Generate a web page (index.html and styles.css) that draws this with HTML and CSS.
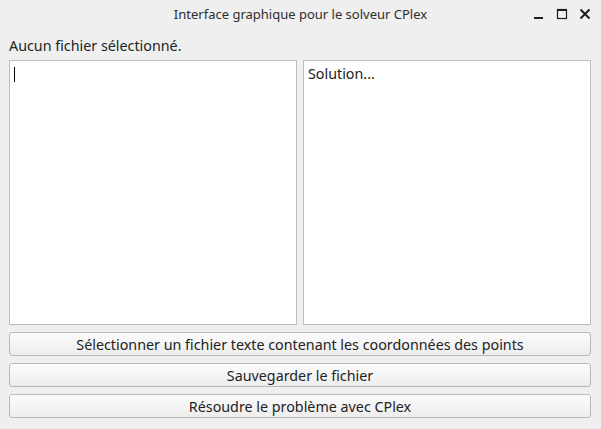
FILE: index.html
```html
<!DOCTYPE html>
<html lang="fr">
<head>
<meta charset="utf-8">
<title>Interface graphique pour le solveur CPlex</title>
<link rel="stylesheet" href="styles.css">
</head>
<body>
<div class="window">
  <header class="titlebar">
    <span class="title">Interface graphique pour le solveur CPlex</span>
    <div class="controls">
      <svg class="ctl" width="12" height="12" viewBox="0 0 12 12"><rect x="1" y="9" width="9" height="2" fill="#1e1e1e"/></svg>
      <svg class="ctl" width="12" height="12" viewBox="0 0 12 12"><rect x="1.5" y="1.5" width="9" height="9" fill="none" stroke="#1e1e1e" stroke-width="1.2"/><rect x="1" y="1" width="10" height="2" fill="#1e1e1e"/></svg>
      <svg class="ctl" width="12" height="12" viewBox="0 0 12 12"><path d="M1.5 1.5 L10.5 10.5 M10.5 1.5 L1.5 10.5" stroke="#1e1e1e" stroke-width="2"/></svg>
    </div>
  </header>
  <main class="content">
    <div class="label">Aucun fichier sélectionné.</div>
    <div class="panes">
      <div class="pane"><span class="caret"></span></div>
      <div class="pane">Solution...</div>
    </div>
    <div class="buttons">
      <button class="btn">Sélectionner un fichier texte contenant les coordonnées des points</button>
      <button class="btn">Sauvegarder le fichier</button>
      <button class="btn">Résoudre le problème avec CPlex</button>
    </div>
  </main>
</div>
</body>
</html>
```

FILE: styles.css
```css
html, body {
  margin: 0;
  padding: 0;
  background: #efefef;
}
.window {
  width: 601px;
  height: 429px;
  background: #efefef;
  font-family: "Noto Sans", "DejaVu Sans", sans-serif;
  color: #222;
  display: flex;
  flex-direction: column;
}
.titlebar {
  height: 28px;
  position: relative;
  display: flex;
  align-items: center;
  justify-content: center;
}
.title {
  font-size: 13px;
  color: #2e2e2e;
}
.controls {
  position: absolute;
  right: 10px;
  top: 8px;
  display: flex;
  gap: 11px;
}
.ctl { display: block; }
.content {
  padding: 6px 10px 0 9px;
  display: flex;
  flex-direction: column;
}
.label {
  font-size: 14.3px;
  height: 26px;
  line-height: 24px;
}
.panes {
  display: flex;
  gap: 6px;
  height: 265px;
}
.pane {
  flex: 1;
  background: #fff;
  border: 1px solid #bdbdbd;
  padding: 4px 4px;
  font-size: 14.3px;
  line-height: 18px;
}
.caret {
  display: inline-block;
  width: 1px;
  height: 15px;
  background: #000;
  vertical-align: -3px;
}
.buttons {
  margin-top: 7px;
  display: flex;
  flex-direction: column;
  gap: 7px;
}
.btn {
  height: 24px;
  border: 1px solid #b9b9b9;
  border-radius: 3px;
  background: linear-gradient(#fbfbfb, #ededed);
  font-family: inherit;
  font-size: 14.3px;
  color: #222;
  padding: 0;
}
```
